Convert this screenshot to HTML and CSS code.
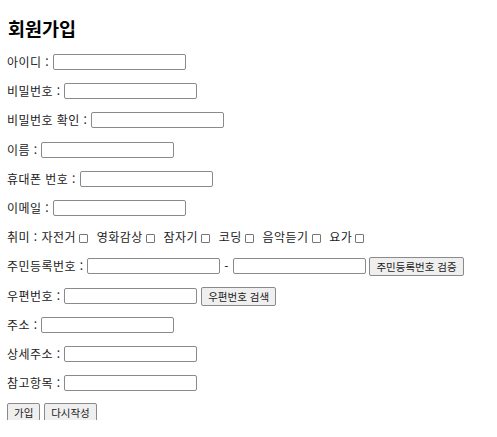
FILE: index.html
```html
<!DOCTYPE html>
<html lang="ko">
<head>
    <meta charset="UTF-8">
    <meta name="viewport" content="width=device-width, initial-scale=1.0">
    <title>회원가입</title>
    <link rel="stylesheet" href="styles.css">
</head>
<body>
    <h2 class="title">회원가입</h2>
    <form class="join">
        <div class="row">아이디 : <input type="text" class="txt"></div>
        <div class="row">비밀번호 : <input type="password" class="txt"></div>
        <div class="row">비밀번호 확인 : <input type="password" class="txt"></div>
        <div class="row">이름 : <input type="text" class="txt"></div>
        <div class="row">휴대폰 번호 : <input type="text" class="txt"></div>
        <div class="row">이메일 : <input type="text" class="txt"></div>
        <div class="row">취미 : 자전거<input type="checkbox" class="chk"> 영화감상<input type="checkbox" class="chk"> 잠자기<input type="checkbox" class="chk"> 코딩<input type="checkbox" class="chk"> 음악듣기<input type="checkbox" class="chk"> 요가<input type="checkbox" class="chk"></div>
        <div class="row">주민등록번호 : <input type="text" class="txt"> - <input type="text" class="txt"> <button type="button" class="btn">주민등록번호 검증</button></div>
        <div class="row">우편번호 : <input type="text" class="txt"> <button type="button" class="btn">우편번호 검색</button></div>
        <div class="row">주소 : <input type="text" class="txt"></div>
        <div class="row">상세주소 : <input type="text" class="txt"></div>
        <div class="row">참고항목 : <input type="text" class="txt"></div>
        <div class="row"><button type="submit" class="btn">가입</button> <button type="reset" class="btn">다시작성</button></div>
    </form>
</body>
</html>
```

FILE: styles.css
```css
body{
    margin: 0;
    padding: 0 7px;
    color: #222;
    font-family: "Noto Sans CJK KR", "Liberation Sans", sans-serif;
    font-size: 12px;
    letter-spacing: 0.45px;
    background: #fff;
}
.title{
    margin: 16px 0 0 1px;
    height: 24px;
    line-height: 24px;
    font-size: 18.5px;
    font-weight: bold;
    letter-spacing: 0;
    color: #000;
}
.join{
    display: flex;
    flex-direction: column;
    gap: 13.2px;
    margin-top: 14px;
}
.row{
    height: 16px;
    line-height: 16px;
    white-space: nowrap;
}
.txt{
    box-sizing: border-box;
    width: 133px;
    height: 16px;
    margin: 0;
    padding: 0 2px;
    border: 1px solid #8a8a8a;
    border-radius: 2px;
    vertical-align: top;
    font-size: 11px;
}
.chk{
    appearance: none;
    box-sizing: border-box;
    width: 9px;
    height: 9px;
    margin: 0 5px 0 3px;
    border: 1px solid #777;
    border-radius: 1px;
    vertical-align: -1px;
    background: #fff;
}
.btn{
    box-sizing: border-box;
    height: 19px;
    margin: -1px 0 0;
    padding: 0 6px;
    border: 1px solid #8a8a8a;
    border-radius: 2px;
    background: #efefef;
    color: #222;
    font-family: inherit;
    font-size: 10.5px;
    vertical-align: top;
}
```
